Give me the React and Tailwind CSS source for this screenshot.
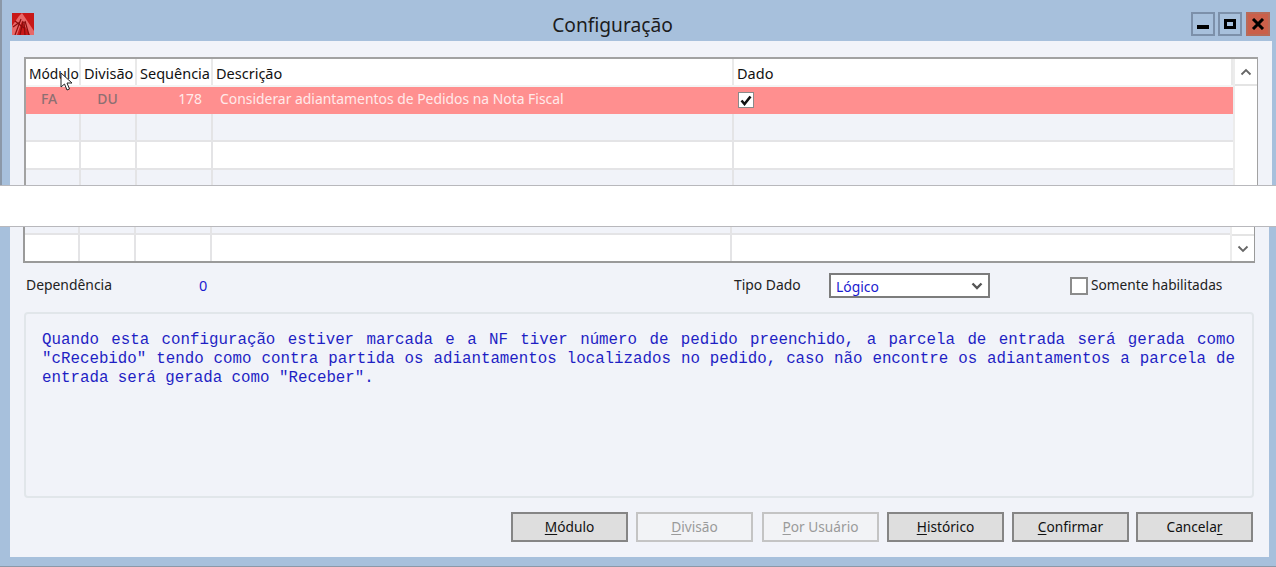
import React from 'react';

const font = "font-['Noto_Sans','Liberation_Sans',sans-serif]";

const topCols = 'grid grid-cols-[55px_56px_76px_521px_1fr]';
const bottomCols = 'grid grid-cols-[55px_56px_76px_520px_1fr]';

// --- ROW OF EMPTY GRID CELLS ---
const EmptyRow = ({ cols, height, bg, bottom }) => (
  <div className={`${cols} ${height} ${bg} ${bottom ? 'border-b-2 border-[#e4e4e6]' : ''}`}>
    {[0, 1, 2, 3].map((i) => (
      <div key={i} className="border-r-2 border-[#e4e4e6]" />
    ))}
    <div />
  </div>
);

const HeaderCell = ({ children, className = '' }) => (
  <div className={`h-[26px] bg-white border-r-2 border-[#e9e9e9] pl-[3px] leading-[28px] text-[14.5px] text-[#111] whitespace-nowrap overflow-hidden ${className}`}>
    {children}
  </div>
);

const WinButton = ({ children, className = '' }) => (
  <div className={`w-[24px] h-[24px] border-2 flex items-center justify-center ${className}`}>
    {children}
  </div>
);

const ActionButton = ({ mnemonic, before = '', after, disabled, className = '' }) => (
  <button
    className={`w-[117px] h-[30px] border-2 text-[13.7px] ${
      disabled ? 'bg-[#f2f3f6] border-[#c4c4c4] text-[#9a9a9a]' : 'bg-[#dedede] border-[#858585] text-[#111]'
    } ${className}`}
  >
    {before}
    <span className="underline underline-offset-2">{mnemonic}</span>
    {after}
  </button>
);

export default function App() {
  return (
    <div className={`w-[1276px] h-[567px] overflow-hidden bg-white flex flex-col ${font}`}>
      {/* TOP: TITLE BAR + GRID START */}
      <div className="h-[185px] shrink-0 bg-[#a7c0dc] border-l-2 border-[#8b98a8] flex flex-col relative">
        <div className="h-[41px] shrink-0 flex items-start pl-[10px] relative">
          <svg className="mt-[13px]" width="22" height="22" viewBox="0 0 22 22">
            <rect width="22" height="22" fill="#c81818" />
            <path d="M0 22 L0 13 L7 3 L10 0 L22 18 L22 22 L18 22 L10 8 L5 22 Z" fill="#e86868" />
            <path d="M3 22 L9 6 M8 22 L11 8 M13 22 L12 9 M17 22 L13 8 M1 14 L8 9 M3 8 L12 15" stroke="#8a0c0c" strokeWidth="1.2" />
          </svg>
          <div className="flex-1 text-center text-[19.2px] leading-[50px] text-[#1c1c1c] pl-[10px] pr-[10px]">Configuração</div>
          <div className="flex gap-[3px] mt-[12px] mr-[6px]">
            <WinButton className="border-[#7c90aa]">
              <div className="w-[12px] h-[4px] bg-black mt-[5px]" />
            </WinButton>
            <WinButton className="border-[#7c90aa]">
              <div className="w-[12px] h-[10px] border-[3px] border-black" />
            </WinButton>
            <WinButton className="border-[#b86a58] bg-[#cb5f4a] ml-[1px]">
              <svg width="14" height="12" viewBox="0 0 14 12">
                <path d="M2 1 L12 11 M12 1 L2 11" stroke="#000" strokeWidth="3" />
              </svg>
            </WinButton>
          </div>
        </div>

        <div className="flex-1 ml-[8px] mr-[4px] bg-[#f1f3f9] pt-[16px] pl-[14px] pr-[14px] overflow-hidden">
          <div className="w-[1234px] h-[200px] border-2 border-[#a2a2a2] flex">
            <div className="w-[1207px] shrink-0">
              <div className={`${topCols} h-[28px] bg-[#f4f4f4] relative`}>
                <HeaderCell><span className="text-[13.8px]">Módulo</span></HeaderCell>
                <HeaderCell>Divisão</HeaderCell>
                <HeaderCell>Sequência</HeaderCell>
                <HeaderCell>Descrição</HeaderCell>
                <HeaderCell className="border-r-0">Dado</HeaderCell>
                {/* mouse cursor over the header */}
                <svg className="absolute left-[34px] top-[13px]" width="14" height="20" viewBox="0 0 14 20">
                  <path d="M1 1 L1 15 L4.5 12 L7 18 L9.5 17 L7 11 L12 11 Z" fill="#fff" stroke="#222" strokeWidth="1" />
                </svg>
              </div>
              <div className={`${topCols} h-[27px] bg-[#ff8f8f] items-center text-[13.9px] pb-[2px]`}>
                <div className="text-center font-medium text-[#8d6f72] pr-[9px]">FA</div>
                <div className="text-center font-medium text-[#8d6f72] pr-[3px]">DU</div>
                <div className="text-right pr-[11px] text-[#ffeaea]">178</div>
                <div className="pl-[7px] text-[#ffeaea] whitespace-nowrap">Considerar adiantamentos de Pedidos na Nota Fiscal</div>
                <div className="pl-[4px] mt-[1px]">
                  <div className="w-[16px] h-[16px] bg-white border border-[#8a8a8a] flex items-center justify-center">
                    <svg width="12" height="11" viewBox="0 0 12 11">
                      <path d="M1.5 5.5 L4.5 9 L10.5 1.5" fill="none" stroke="#111" strokeWidth="2.6" />
                    </svg>
                  </div>
                </div>
              </div>
              <EmptyRow cols={topCols} height="h-[28px]" bg="bg-[#f1f3f9]" bottom />
              <EmptyRow cols={topCols} height="h-[28px]" bg="bg-white" bottom />
              <EmptyRow cols={topCols} height="h-[28px]" bg="bg-[#f1f3f9]" />
            </div>
            <div className="w-[24px] shrink-0 bg-white border-l-2 border-[#ececec]">
              <div className="h-[27px] border-b-2 border-[#e4e4e4] flex items-center justify-center">
                <svg width="12" height="8" viewBox="0 0 12 8">
                  <path d="M1.5 6.5 L6 2 L10.5 6.5" fill="none" stroke="#666" strokeWidth="1.8" />
                </svg>
              </div>
            </div>
          </div>
        </div>
      </div>

      {/* WHITE BAND */}
      <div className="h-[42px] shrink-0 bg-white border-y border-[#b8b8bc]" />

      {/* BOTTOM: GRID END + DETAILS */}
      <div className="flex-1 bg-[#a7c0dc] border-b border-[#8b98a8] pl-[10px] pr-[7px] pb-[9px] flex flex-col">
        <div className="flex-1 bg-[#f1f3f9] flex flex-col pl-[13px] pr-[12px]">
          {/* grid end */}
          <div className="w-[1232px] h-[36px] border-x-2 border-b-2 border-[#9a9a9a] flex shrink-0">
            <div className="w-[1205px] shrink-0">
              <EmptyRow cols={bottomCols} height="h-[8px]" bg="bg-[#f1f3f9]" bottom />
              <EmptyRow cols={bottomCols} height="h-[26px]" bg="bg-white" />
            </div>
            <div className="w-[24px] shrink-0 bg-white border-l-2 border-[#ececec] flex flex-col">
              <div className="h-[9px] border-b-2 border-[#e4e4e4]" />
              <div className="flex-1 flex items-center justify-center">
                <svg width="12" height="8" viewBox="0 0 12 8">
                  <path d="M1.5 1.5 L6 6 L10.5 1.5" fill="none" stroke="#666" strokeWidth="1.8" />
                </svg>
              </div>
            </div>
          </div>

          {/* labels and filters */}
          <div className="h-[49px] shrink-0 flex items-center pb-[4px] text-[13.9px] text-[#222]">
            <div className="w-[173px] pl-[3px] whitespace-nowrap">Dependência</div>
            <div className="w-[538px] pl-[3px] text-[14.5px] text-[#1a1ad0]">0</div>
            <div className="w-[95px] whitespace-nowrap">Tipo Dado</div>
            <div className="w-[161px] h-[25px] border-2 border-[#7c7c7c] bg-white flex items-center justify-between pl-[5px] pr-[5px] text-[#1a1ad0]">
              <span className="pt-[3px]">Lógico</span>
              <svg width="12" height="8" viewBox="0 0 12 8">
                <path d="M1.5 1.5 L6 6 L10.5 1.5" fill="none" stroke="#555" strokeWidth="2.4" />
              </svg>
            </div>
            <div className="ml-[80px] w-[18px] h-[18px] border-2 border-[#8c8c8c] bg-white shrink-0" />
            <div className="ml-[3px] whitespace-nowrap text-[13.7px]">Somente habilitadas</div>
          </div>

          {/* description */}
          <div className="ml-[1px] w-[1230px] h-[186px] shrink-0 border-2 border-[#e1e6ea] rounded-[4px] pt-[17px] pl-[16px] pr-[17px] text-justify font-['Liberation_Mono','Courier_New',monospace] text-[15.8px] leading-[19px] text-[#1f1fc4]">
            Quando esta configuração estiver marcada e a NF tiver número de pedido preenchido, a parcela de entrada será gerada como "cRecebido" tendo como contra partida os adiantamentos localizados no pedido, caso não encontre os adiantamentos a parcela de entrada será gerada como "Receber".
          </div>

          {/* buttons */}
          <div className="flex justify-end gap-[8px] mt-[14px] pr-[4px]">
            <ActionButton mnemonic="M" after="ódulo" />
            <ActionButton mnemonic="D" after="ivisão" disabled />
            <ActionButton mnemonic="P" after="or Usuário" disabled className="ml-[1px]" />
            <ActionButton mnemonic="H" after="istórico" />
            <ActionButton mnemonic="C" after="onfirmar" className="mr-[-1px]" />
            <ActionButton before="Cancela" mnemonic="r" />
          </div>
        </div>
      </div>
    </div>
  );
}
